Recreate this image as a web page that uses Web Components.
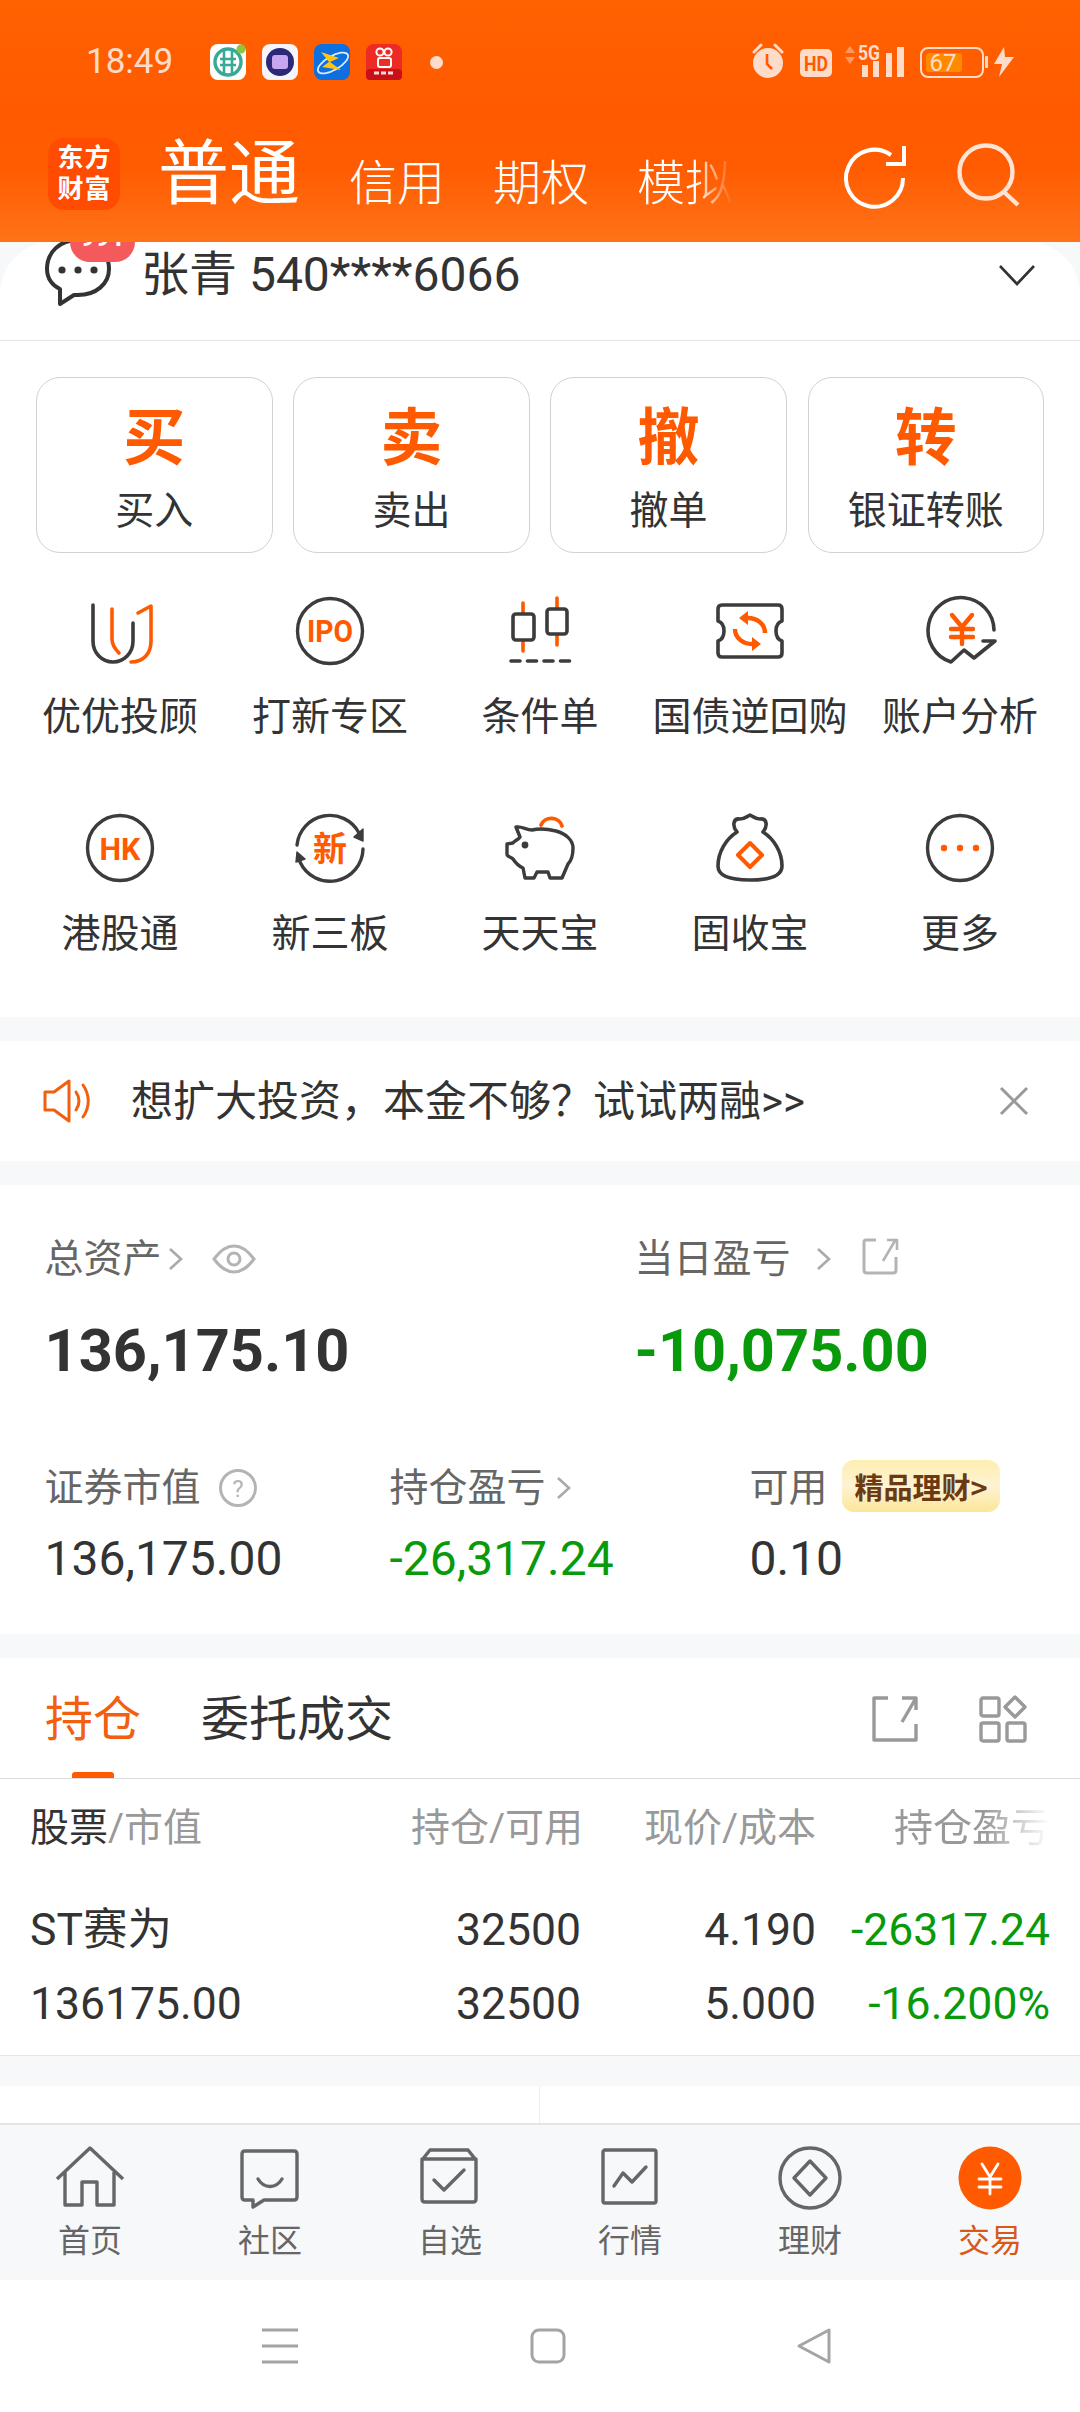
<!DOCTYPE html>
<html lang="zh">
<head>
<meta charset="utf-8">
<style>
  html, body { margin: 0; padding: 0; }
  body {
    width: 1080px;
    height: 2412px;
    overflow: hidden;
    background: #f7f8fa;
    color: #333;
    font-family: Roboto, "Noto Sans CJK SC", sans-serif;
    display: flex;
    flex-direction: column;
  }
  svg { display: block; overflow: visible; }
  holding-row b { font-weight: 400; color: #333; }
</style>
</head>
<body>

<top-banner>
  <status-bar></status-bar>
  <trade-header></trade-header>
</top-banner>

<account-row>张青 540****6066</account-row>

<trade-menu>
  <action-button><span slot="glyph">买</span>买入</action-button>
  <action-button><span slot="glyph">卖</span>卖出</action-button>
  <action-button><span slot="glyph">撤</span>撤单</action-button>
  <action-button><span slot="glyph">转</span>银证转账</action-button>

  <tool-item>
    <svg slot="icon" width="68" height="68" fill="none" stroke-width="3.6" stroke-linecap="round" stroke-linejoin="round">
      <path d="M7 8V44C7 56 16 65 27 65C38 65 47 56 47 44V26" stroke="#3c3c3c"/>
      <path d="M26 12V42C26 48 29 52 33 56" stroke="#ff5a00"/>
      <path d="M45 65C58 65 65 56 65 44V9L52 16" stroke="#ff5a00"/>
    </svg>优优投顾
  </tool-item>
  <tool-item>
    <svg slot="icon" width="68" height="68" fill="none">
      <circle cx="34" cy="34" r="32.5" stroke="#3c3c3c" stroke-width="3.4"/>
      <text x="34" y="45" text-anchor="middle" textLength="46" lengthAdjust="spacingAndGlyphs" font-size="31" font-weight="700" fill="#ff5a00" font-family="Roboto">IPO</text>
    </svg>打新专区
  </tool-item>
  <tool-item>
    <svg slot="icon" width="68" height="68" fill="none" stroke-width="3.6" stroke-linecap="round" stroke-linejoin="round">
      <path d="M17 6V54M51 1V48" stroke="#ff5a00"/>
      <rect x="7" y="17" width="21" height="26" rx="3" fill="#fff" stroke="#3c3c3c"/>
      <rect x="41" y="12" width="20" height="25" rx="3" fill="#fff" stroke="#3c3c3c"/>
      <path d="M5 64H65" stroke="#3c3c3c" stroke-dasharray="9 7.5"/>
    </svg>条件单
  </tool-item>
  <tool-item>
    <svg slot="icon" width="68" height="68" fill="none" stroke-width="3.6" stroke-linejoin="round">
      <path d="M6 8H62Q66 8 66 12V24Q60 26 60 34Q60 42 66 44V56Q66 60 62 60H6Q2 60 2 56V44Q8 42 8 34Q8 26 2 24V12Q2 8 6 8Z" stroke="#3c3c3c"/>
      <path d="M49 36C49 27 41 21 32 21M19 32C19 41 27 47 36 47" stroke="#ff5a00" stroke-width="4.4"/>
      <path d="M32 14V28L23 21ZM36 40V54L45 47Z" fill="#ff5a00"/>
    </svg>国债逆回购
  </tool-item>
  <tool-item>
    <svg slot="icon" width="68" height="68" fill="none" stroke-width="3.6" stroke-linejoin="round" stroke-linecap="round">
      <path d="M68 33A33 33 0 1 0 25 65L38 53L48 61L69 44H57" stroke="#3c3c3c"/>
      <path d="M26 18L36 30L46 18M25 32H47M25 40H47M36 30V47" stroke="#ff5a00" stroke-width="4.4"/>
    </svg>账户分析
  </tool-item>
  <tool-item>
    <svg slot="icon" width="68" height="68" fill="none">
      <circle cx="34" cy="34" r="32.5" stroke="#3c3c3c" stroke-width="3.4"/>
      <text x="34" y="46" text-anchor="middle" textLength="41" lengthAdjust="spacingAndGlyphs" font-size="32" font-weight="700" fill="#ff5a00" font-family="Roboto">HK</text>
    </svg>港股通
  </tool-item>
  <tool-item>
    <svg slot="icon" width="68" height="68" fill="none" stroke="#3c3c3c" stroke-width="3.4" stroke-linecap="round">
      <path d="M1 31A33 33 0 0 1 63 19M67 35A33 33 0 0 1 4 48"/>
      <path d="M58 23L67 15V27ZM0 48L1 38L9 45Z" fill="#3c3c3c" stroke-width="1.4" stroke-linejoin="round"/>
      <text x="34" y="47" text-anchor="middle" font-size="34" font-weight="700" fill="#ff5a00" stroke="none" font-family="Noto Sans CJK SC">新</text>
    </svg>新三板
  </tool-item>
  <tool-item>
    <svg slot="icon" width="68" height="68" fill="none" stroke-width="3.4" stroke-linejoin="round" stroke-linecap="round">
      <path d="M35 11A11 10 0 0 1 56 12" stroke="#ff5a00" stroke-width="3.8"/>
      <path d="M10 13C16 12 20 16 26 16C34 14 42 15 50 17C60 20 67 26 67 34C67 41 66 46 62 50L56 64H44L42 58H31L28 64H19L17 54C12 52 9 48 7 45C5 43 1 43 1 40V30L7 29C8 27 12 26 14 23Z" stroke="#3c3c3c"/>
      <circle cx="19" cy="31" r="3.4" fill="#3c3c3c"/>
    </svg>天天宝
  </tool-item>
  <tool-item>
    <svg slot="icon" width="68" height="68" fill="none" stroke-width="3.6" stroke-linejoin="round">
      <path d="M21 18C16 12 17 4 24 5C28 5 30 3 34 1C38 3 40 5 44 5C51 4 52 12 47 18C58 25 66 38 66 52C66 62 55 66 34 66C13 66 2 62 2 52C2 38 10 25 21 18Z" stroke="#3c3c3c"/>
      <path d="M34 29L46 41L34 53L22 41Z" stroke="#ff5a00" stroke-width="4"/>
    </svg>固收宝
  </tool-item>
  <tool-item>
    <svg slot="icon" width="68" height="68" fill="none">
      <circle cx="34" cy="34" r="32.5" stroke="#3c3c3c" stroke-width="3.4"/>
      <circle cx="18" cy="34" r="3.2" fill="#ff5a00"/>
      <circle cx="34" cy="34" r="3.2" fill="#ff5a00"/>
      <circle cx="50" cy="34" r="3.2" fill="#ff5a00"/>
    </svg>更多
  </tool-item>
</trade-menu>

<notice-bar>想扩大投资，本金不够？试试两融&gt;&gt;</notice-bar>

<asset-summary></asset-summary>

<position-panel>
  <holding-row heading>
    <span><b>股票</b>/市值</span><span>持仓/可用</span><span>现价/成本</span><span class="fade">持仓盈亏</span>
  </holding-row>
  <holding-row>
    <span>ST赛为</span><span>32500</span><span>4.190</span><span class="down">-26317.24</span>
  </holding-row>
  <holding-row>
    <span>136175.00</span><span>32500</span><span>5.000</span><span class="down">-16.200%</span>
  </holding-row>
</position-panel>

<blank-strip></blank-strip>

<bottom-tabs>
  <nav-tab>
    <svg slot="icon" width="72" height="64" fill="none" stroke="#666" stroke-width="3.4" stroke-linejoin="round">
      <path d="M3 33L36 2L69 33M11 26V59H28V36H43V59H60V26"/>
    </svg>首页
  </nav-tab>
  <nav-tab>
    <svg slot="icon" width="72" height="64" fill="none" stroke="#666" stroke-width="3.4" stroke-linejoin="round" stroke-linecap="round">
      <path d="M11 5H60Q63 5 63 8V51Q63 54 60 54H30L19 61V54H11Q8 54 8 51V8Q8 5 11 5Z"/>
      <path d="M24 33C30 43 42 43 48 33"/>
    </svg>社区
  </nav-tab>
  <nav-tab>
    <svg slot="icon" width="72" height="64" fill="none" stroke="#666" stroke-width="3.4" stroke-linejoin="round" stroke-linecap="round">
      <path d="M8 14L16 4H54L62 14M8 13H62V53Q62 56 59 56H11Q8 56 8 53Z"/>
      <path d="M20 34L30 44L50 24"/>
    </svg>自选
  </nav-tab>
  <nav-tab>
    <svg slot="icon" width="72" height="64" fill="none" stroke="#666" stroke-width="3.4" stroke-linejoin="round" stroke-linecap="round">
      <rect x="9" y="4" width="53" height="53" rx="2"/>
      <path d="M20 40L29 27L38 36L52 21"/>
    </svg>行情
  </nav-tab>
  <nav-tab>
    <svg slot="icon" width="72" height="64" fill="none" stroke="#666" stroke-width="3.4" stroke-linejoin="round">
      <circle cx="36" cy="32" r="30"/>
      <path d="M36 15L52 32L36 49L20 32Z"/>
    </svg>理财
  </nav-tab>
  <nav-tab active>
    <svg slot="icon" width="72" height="64" fill="none" stroke="#fff" stroke-width="2.8" stroke-linecap="round">
      <circle cx="36" cy="32" r="31.5" fill="#ff5a00" stroke="none"/>
      <path d="M28 18L36 31L44 18M25 33H47M25 41H47M36 31V48"/>
    </svg>交易
  </nav-tab>
</bottom-tabs>

<system-nav></system-nav>

<script>
  // every element here is only a template + an open shadow root
  function define(name, html) {
    const template = document.createElement('template');
    template.innerHTML = html;
    customElements.define(name, class extends HTMLElement {
      constructor() {
        super();
        this.attachShadow({ mode: 'open' }).appendChild(template.content.cloneNode(true));
      }
    });
  }

  define('top-banner', `
    <style>
      :host {
        display: block;
        height: 242px;
        background: linear-gradient(180deg, #ff6200 0%, #ff5a00 45%, #ff5c02 70%, #ff7318 100%);
      }
    </style>
    <slot></slot>
  `);

  define('status-bar', `
    <style>
      :host {
        display: flex;
        align-items: center;
        height: 124px;
        padding: 0 66px 0 86px;
        box-sizing: border-box;
        color: #ffdcc9;
      }
      .time { font-size: 35px; line-height: 36px; width: 124px; }
      .apps { display: flex; gap: 16px; }
      .dot { width: 13px; height: 13px; border-radius: 50%; background: #ffdcc9; margin-left: 28px; }
      .right { margin-left: auto; display: flex; align-items: center; }
      svg { display: block; overflow: visible; }
    </style>
    <span class="time">18:49</span>
    <div class="apps">
      <svg width="36" height="36">
        <rect width="36" height="36" rx="8" fill="#fff"/>
        <circle cx="18" cy="18" r="13" fill="none" stroke="#39a997" stroke-width="3.4"/>
        <path d="M14 6V30M22 6V30M10 15H26M10 21H26" stroke="#39a997" stroke-width="2.6" fill="none"/>
        <circle cx="31" cy="5" r="4.5" fill="#8cc63f"/>
      </svg>
      <svg width="36" height="36">
        <rect width="36" height="36" rx="8" fill="#f5f5fb"/>
        <circle cx="18" cy="18" r="14" fill="#2c2a78"/>
        <rect x="10" y="11" width="16" height="14" rx="3" fill="#c9a6f0"/>
      </svg>
      <svg width="36" height="36">
        <rect width="36" height="36" rx="8" fill="#0d6fe0"/>
        <ellipse cx="19" cy="19" rx="17" ry="7" transform="rotate(-30 19 19)" fill="none" stroke="#d6ecff" stroke-width="1.8"/>
        <path d="M7 8L25 14L16 18L27 26L8 23L15 18Z" fill="#ffc414"/>
      </svg>
      <svg width="36" height="36">
        <rect width="36" height="36" rx="8" fill="#ee2a24"/>
        <rect y="25" width="36" height="11" rx="4" fill="#c8101a"/>
        <circle cx="14" cy="8" r="3.6" fill="none" stroke="#fff" stroke-width="2"/>
        <circle cx="22" cy="8" r="3.6" fill="none" stroke="#fff" stroke-width="2"/>
        <rect x="12" y="14" width="13" height="9" rx="2" fill="none" stroke="#fff" stroke-width="2"/>
        <path d="M8 29H28" stroke="#ffd9d0" stroke-width="3" stroke-dasharray="5 2"/>
      </svg>
    </div>
    <span class="dot"></span>
    <div class="right">
      <svg width="262" height="40" fill="#ffdcc9">
        <circle cx="16" cy="21" r="15"/>
        <path d="M2 10L9 3M30 10L23 3" stroke="#ffdcc9" stroke-width="3" stroke-linecap="round"/>
        <path d="M15 12V22L20 27" stroke="#ff5a00" stroke-width="2.6" fill="none"/>
        <rect x="48" y="7" width="32" height="28" rx="5"/>
        <text x="64" y="29" text-anchor="middle" font-size="21" font-weight="700" fill="#ff5a00" textLength="24" lengthAdjust="spacingAndGlyphs" font-family="Roboto">HD</text>
        <path d="M93 11L98 4L103 11ZM93 15L98 22L103 15Z" fill="#ff9a66"/>
        <text x="106" y="18" font-size="21" font-weight="700" textLength="22" lengthAdjust="spacingAndGlyphs" font-family="Roboto">5G</text>
        <rect x="110" y="23" width="6" height="12"/>
        <rect x="121" y="19" width="6" height="16"/>
        <rect x="134" y="11" width="6" height="24"/>
        <rect x="145" y="5" width="7" height="30"/>
        <rect x="169" y="6" width="62" height="29" rx="7" fill="none" stroke="#ffdcc9" stroke-width="2"/>
        <rect x="174" y="11" width="36" height="19" rx="3" fill="#ff8a00"/>
        <text x="191" y="29" text-anchor="middle" font-size="24" font-family="Roboto">67</text>
        <rect x="233" y="14" width="3" height="12" rx="1"/>
        <path d="M252 5L242 22H250L247 35L262 15H253Z"/>
      </svg>
    </div>
  `);

  define('trade-header', `
    <style>
      :host {
        display: flex;
        align-items: flex-start;
        height: 118px;
        padding: 14px 60px 0 48px;
        box-sizing: border-box;
        color: #fff;
      }
      .logo {
        width: 72px;
        height: 72px;
        border-radius: 16px;
        background: #ff4c00;
        display: grid;
        grid-template-columns: 27px 27px;
        justify-content: center;
        justify-items: center;
        align-content: center;
        font: 700 26px/31px Roboto, "Noto Sans CJK SC", sans-serif;
      }
      .tabs { display: flex; align-items: flex-end; height: 72px; margin-left: 38px; }
      .main { font-size: 71px; line-height: 72px; margin-right: 49px; }
      .sub { font-size: 48px; line-height: 58px; margin-right: 48px; margin-bottom: -3px; font-weight: 300; }
      .fade { margin-right: 0; -webkit-mask-image: linear-gradient(90deg, #000 60%, transparent 100%); mask-image: linear-gradient(90deg, #000 60%, transparent 100%); }
      .tools { margin-left: auto; display: flex; gap: 52px; margin-top: 6px; }
      svg { display: block; overflow: visible; }
    </style>
    <div class="logo"><span>东</span><span>方</span><span>财</span><span>富</span></div>
    <div class="tabs">
      <span class="main">普通</span>
      <span class="sub">信用</span>
      <span class="sub">期权</span>
      <span class="sub fade">模拟</span>
    </div>
    <div class="tools">
      <svg width="62" height="62" fill="none" stroke="#fff" stroke-width="4">
        <path d="M59 34A28.5 28.5 0 1 1 47 11"/>
        <path d="M60 2V20H42"/>
      </svg>
      <svg width="62" height="62" fill="none" stroke="#ffe3d4" stroke-width="4.4">
        <circle cx="28" cy="28" r="26.5"/>
        <path d="M46 48L60 61"/>
      </svg>
    </div>
  `);

  define('account-row', `
    <style>
      :host {
        display: flex;
        align-items: center;
        height: 99px;
        padding: 0 45px;
        box-sizing: border-box;
        background: #fff;
        border-bottom: 1px solid #e6e6e6;
        border-radius: 52px 52px 0 0;
        overflow: hidden;
        position: relative;
      }
      .chat { margin-right: 30px; margin-top: -36px; }
      .name { font-size: 48px; line-height: 60px; margin-top: -32px; }
      .badge {
        position: absolute;
        left: 70px;
        top: -26px;
        width: 65px;
        height: 46px;
        box-sizing: border-box;
        border-radius: 20px;
        background: #f45a5b;
        color: #fff;
        font: 700 26px/30px Roboto, sans-serif;
        text-align: center;
        padding-top: 6px;
      }
      .more { margin-left: auto; margin-top: -32px; }
      svg { display: block; overflow: visible; }
    </style>
    <svg class="chat" width="66" height="68" fill="none" stroke="#333" stroke-width="4" stroke-linejoin="round">
      <path d="M33 1C15 1 2 13 2 30C2 40 8 47 15 50V65L29 56H33C51 56 64 45 64 30C64 13 51 1 33 1Z"/>
      <circle cx="17" cy="31" r="3.6" fill="#333" stroke="none"/>
      <circle cx="33" cy="31" r="3.6" fill="#333" stroke="none"/>
      <circle cx="49" cy="31" r="3.6" fill="#333" stroke="none"/>
    </svg>
    <span class="badge">991</span>
    <span class="name"><slot></slot></span>
    <svg class="more" width="36" height="20" fill="none" stroke="#333" stroke-width="2.6">
      <path d="M1 1L18 19L35 1"/>
    </svg>
  `);

  define('trade-menu', `
    <style>
      :host {
        display: block;
        background: #fff;
        height: 676px;
        box-sizing: border-box;
        padding-top: 36px;
      }
      .top {
        display: grid;
        grid-template-columns: repeat(4, 236.5px);
        gap: 20.7px;
        padding-left: 36px;
        margin-bottom: 44px;
      }
      .tools {
        display: grid;
        grid-template-columns: repeat(5, 210px);
        row-gap: 81px;
        padding-left: 15px;
      }
    </style>
    <div class="top"><slot name="top"></slot></div>
    <div class="tools"><slot></slot></div>
  `);

  define('action-button', `
    <style>
      :host {
        display: flex;
        flex-direction: column;
        align-items: center;
        height: 176px;
        box-sizing: border-box;
        border: 1px solid #d2d2d2;
        border-radius: 24px;
        padding-top: 30px;
        font-size: 39px;
        line-height: 38px;
        color: #333;
      }
      .glyph { font-size: 62px; line-height: 62px; font-weight: 700; color: #ff5a00; margin-bottom: 22px; }
    </style>
    <span class="glyph"><slot name="glyph"></slot></span>
    <slot></slot>
  `);

  define('tool-item', `
    <style>
      :host {
        display: flex;
        flex-direction: column;
        align-items: center;
        height: 136px;
        font-size: 39px;
        line-height: 38px;
        white-space: nowrap;
        color: #333;
      }
      .icon { height: 68px; margin-bottom: 33px; }
    </style>
    <div class="icon"><slot name="icon"></slot></div>
    <slot></slot>
  `);

  define('notice-bar', `
    <style>
      :host {
        display: flex;
        align-items: center;
        height: 120px;
        margin-top: 24px;
        padding: 0 52px 0 43px;
        box-sizing: border-box;
        background: #fff;
        font-size: 42px;
        color: #333;
      }
      .text { margin: -8px 0 0 41px; white-space: nowrap; }
      .close { margin-left: auto; }
      svg { display: block; overflow: visible; }
    </style>
    <svg width="47" height="42" fill="none" stroke="#f2600f" stroke-width="3" stroke-linejoin="round" stroke-linecap="round">
      <path d="M2 12H11L26 1V41L11 30H2Z"/>
      <path d="M33 12C37 18 37 24 33 30M40 5C47 15 47 27 40 37"/>
    </svg>
    <span class="text"><slot></slot></span>
    <svg class="close" width="28" height="28" fill="none" stroke="#999" stroke-width="3">
      <path d="M1 1L27 27M27 1L1 27"/>
    </svg>
  `);

  define('asset-summary', `
    <style>
      :host {
        display: block;
        height: 449px;
        margin-top: 24px;
        padding: 55px 0 0 44.5px;
        box-sizing: border-box;
        background: #fff;
      }
      .row { display: flex; }
      .label { display: flex; align-items: center; height: 38px; font-size: 39px; line-height: 38px; color: #666; }
      .big { font-size: 59.5px; line-height: 60px; font-weight: 700; margin-top: 43px; color: #333; }
      .val { font-size: 48px; line-height: 47px; margin-top: 28px; color: #333; }
      .green { color: #089a0a; }
      .one > div:first-child { width: 590px; }
      .two { margin-top: 88px; }
      .two > div:nth-child(1) { width: 345px; }
      .two > div:nth-child(2) { width: 360px; }
      .gain {
        display: flex;
        align-items: center;
        height: 52px;
        margin: -9px 0 -5px 14px;
        padding: 0 12px 0 13px;
        border-radius: 12px;
        background: linear-gradient(180deg, #fdeeb2, #fff3d2 50%, #fbe69a);
        color: #6b3a12;
        font: 700 29px/32px "Noto Sans CJK SC", sans-serif;
        white-space: nowrap;
      }
      svg { display: block; overflow: visible; }
    </style>
    <div class="row one">
      <div>
        <div class="label">总资产
          <svg style="margin-left:6px" width="15" height="24" fill="none" stroke="#aaa" stroke-width="2.6"><path d="M2 2L13 12L2 22"/></svg>
          <svg style="margin-left:29px" width="44" height="30" fill="none" stroke="#b4b4b4" stroke-width="3"><path d="M2 15C10 4 16 2 22 2C28 2 34 4 42 15C34 26 28 28 22 28C16 28 10 26 2 15Z"/><circle cx="22" cy="15" r="6"/></svg>
        </div>
        <div class="big">136,175.10</div>
      </div>
      <div>
        <div class="label">当日盈亏
          <svg style="margin-left:25px" width="15" height="24" fill="none" stroke="#aaa" stroke-width="2.6"><path d="M2 2L13 12L2 22"/></svg>
          <svg style="margin-left:31px;margin-top:-6px" width="36" height="38" fill="none" stroke="#b4b4b4" stroke-width="3"><path d="M14 3H4Q2 3 2 5V33Q2 36 5 36H31Q34 36 34 33V20"/><path d="M34 2L21 24M25 3H35V13" stroke-width="2.6"/></svg>
        </div>
        <div class="big green">-10,075.00</div>
      </div>
    </div>
    <div class="row two">
      <div>
        <div class="label">证券市值
          <svg style="margin-left:18px" width="38" height="38" fill="none" stroke="#b4b4b4" stroke-width="3"><circle cx="19" cy="19" r="17.5"/><text x="19" y="28" text-anchor="middle" font-size="24" fill="#b4b4b4" stroke="none" font-family="Roboto">?</text></svg>
        </div>
        <div class="val">136,175.00</div>
      </div>
      <div>
        <div class="label">持仓盈亏
          <svg style="margin-left:10px" width="15" height="24" fill="none" stroke="#aaa" stroke-width="2.6"><path d="M2 2L13 12L2 22"/></svg>
        </div>
        <div class="val green">-26,317.24</div>
      </div>
      <div>
        <div class="label">可用<span class="gain">精品理财&gt;</span></div>
        <div class="val">0.10</div>
      </div>
    </div>
  `);

  define('position-panel', `
    <style>
      :host {
        display: block;
        height: 398px;
        margin-top: 24px;
        box-sizing: border-box;
        background: #fff;
        border-bottom: 1px solid #e6e6e6;
      }
      .tabs {
        display: flex;
        height: 121px;
        box-sizing: border-box;
        padding: 0 53px 0 45px;
        border-bottom: 1px solid #dcdcdc;
        font-size: 48px;
        line-height: 47px;
      }
      .tab { display: flex; flex-direction: column; align-items: center; padding-top: 38px; margin-right: 60px; }
      .tab.on { color: #f2600f; }
      .tab.on::after {
        content: '';
        width: 42px;
        height: 6px;
        margin-top: auto;
        border-radius: 3px 3px 0 0;
        background: #ff5a00;
      }
      .icons { margin-left: auto; display: flex; gap: 61px; padding-top: 38px; }
      .table { padding-top: 30px; }
      svg { display: block; overflow: visible; }
    </style>
    <div class="tabs">
      <div class="tab on">持仓</div>
      <div class="tab">委托成交</div>
      <div class="icons">
        <svg width="46" height="46" fill="none" stroke="#999" stroke-width="3.4"><path d="M16 2H2V44H44V28M44 2L30 26M30 2H44V14" stroke-linejoin="round"/></svg>
        <svg width="48" height="46" fill="none" stroke="#999" stroke-width="3.4" stroke-linejoin="round"><rect x="2" y="2" width="18" height="18" rx="2"/><path d="M36 1L46 11L36 21L26 11Z"/><rect x="2" y="27" width="18" height="18" rx="2"/><rect x="28" y="27" width="18" height="18" rx="2"/></svg>
      </div>
    </div>
    <div class="table"><slot></slot></div>
  `);

  define('holding-row', `
    <style>
      :host {
        display: grid;
        grid-template-columns: 381px 170px 235px 234px;
        padding-left: 30px;
        height: 74px;
        font-size: 44.5px;
        line-height: 44px;
        color: #333;
      }
      :host([heading]) {
        height: 99px;
        font-size: 39px;
        line-height: 38px;
        color: #999;
      }
      ::slotted(span) { text-align: right; white-space: nowrap; }
      ::slotted(span:first-child) { text-align: left; }
      ::slotted(.down) { color: #089a0a; }
      ::slotted(.fade) {
        -webkit-mask-image: linear-gradient(90deg, #000 72%, transparent 100%);
        mask-image: linear-gradient(90deg, #000 72%, transparent 100%);
      }
    </style>
    <slot></slot>
  `);

  define('blank-strip', `
    <style>
      :host {
        display: block;
        height: 37px;
        margin-top: 30px;
        background: linear-gradient(#eee, #eee) 539px 0 / 1px 100% no-repeat #fff;
      }
    </style>
  `);

  define('bottom-tabs', `
    <style>
      :host {
        display: grid;
        grid-template-columns: repeat(6, 180px);
        height: 157px;
        box-sizing: border-box;
        border-top: 2px solid #e4e4e6;
        padding-top: 21px;
        background: #f7f8fa;
      }
    </style>
    <slot></slot>
  `);

  define('nav-tab', `
    <style>
      :host {
        display: flex;
        flex-direction: column;
        align-items: center;
        font-size: 32px;
        line-height: 32px;
        color: #666;
      }
      :host([active]) { color: #d9591a; }
      .icon { height: 64px; margin-bottom: 15px; }
    </style>
    <div class="icon"><slot name="icon"></slot></div>
    <slot></slot>
  `);

  define('system-nav', `
    <style>
      :host {
        display: flex;
        height: 132px;
        padding: 48px 0 0 262px;
        box-sizing: border-box;
        background: #fff;
      }
      svg { display: block; overflow: visible; }
    </style>
    <svg width="36" height="36" fill="none" stroke="#a4a4a4" stroke-width="3"><path d="M0 2H36M0 18H36M0 34H36"/></svg>
    <svg style="margin-left:232px" width="36" height="36" fill="none" stroke="#a4a4a4" stroke-width="3"><rect x="2" y="2" width="32" height="32" rx="7"/></svg>
    <svg style="margin-left:231px" width="34" height="36" fill="none" stroke="#a4a4a4" stroke-width="3" stroke-linejoin="round"><path d="M32 2V34L2 18Z"/></svg>
  `);

  // the first four buttons go on the top row of the menu
  document.querySelectorAll('action-button').forEach(b => b.slot = 'top');
</script>
</body>
</html>
